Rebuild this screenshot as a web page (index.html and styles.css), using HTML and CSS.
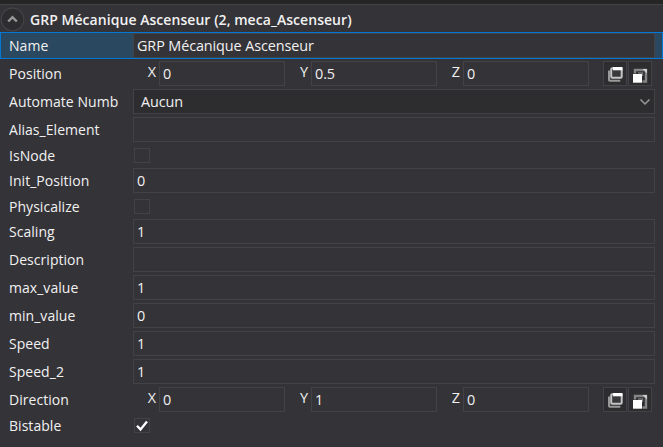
FILE: index.html
```html
<!DOCTYPE html>
<html lang="fr">
<head>
<meta charset="utf-8">
<title>GRP Mécanique Ascenseur</title>
<link rel="stylesheet" href="styles.css">
</head>
<body>
<svg width="0" height="0" class="defs">
  <symbol id="copy" viewBox="0 0 22 23">
    <path d="M5 8.500v9.500q0 .8.800.8h10.500" fill="none" stroke="#999" stroke-width="2"/>
    <rect x="7.200" y="6.200" width="10.500" height="9.600" rx="1" fill="#38383b" stroke="#c4c4c4" stroke-width="2"/>
    <path d="M9 5h9.500v3.300h-9.500z" fill="#fff"/>
  </symbol>
  <symbol id="paste" viewBox="0 0 22 23">
    <path d="M6 11.500V8h11v11.500h-3.500" fill="none" stroke="#858585" stroke-width="2.400"/>
    <path d="M9 11h4.500v3" fill="none" stroke="#777" stroke-width="1.300"/>
    <path d="M13.500 7h4.500v4.500z" fill="#ccc"/>
    <path d="M4 12h9v8.700H4z" fill="#fff"/>
  </symbol>
</svg>
<main class="panel">
  <header class="head">
    <svg class="toggle" viewBox="0 0 25 25"><circle cx="12.500" cy="12.500" r="11.300"/><path d="M8.200 14.500l4.300-4.300 4.300 4.300"/></svg>
    <h1>GRP Mécanique Ascenseur (2, meca_Ascenseur)</h1>
  </header>
  <div class="row selected"><label>Name</label><div class="field">GRP Mécanique Ascenseur</div></div>
  <div class="row"><label>Position</label><div class="vector">
    <span>X</span><div class="field">0</div><span>Y</span><div class="field">0.5</div><span>Z</span><div class="field">0</div>
    <button><svg><use href="#copy"/></svg></button><button><svg><use href="#paste"/></svg></button></div></div>
  <div class="row"><label>Automate Numb</label><div class="field combo">Aucun<svg viewBox="0 0 12 8"><path d="M1.500 1.500l4.500 4.500 4.500-4.500"/></svg></div></div>
  <div class="row"><label>Alias_Element</label><div class="field"></div></div>
  <div class="row short"><label>IsNode</label><div class="check"></div></div>
  <div class="row"><label>Init_Position</label><div class="field">0</div></div>
  <div class="row short"><label>Physicalize</label><div class="check"></div></div>
  <div class="row"><label>Scaling</label><div class="field">1</div></div>
  <div class="row"><label>Description</label><div class="field"></div></div>
  <div class="row"><label>max_value</label><div class="field">1</div></div>
  <div class="row"><label>min_value</label><div class="field">0</div></div>
  <div class="row"><label>Speed</label><div class="field">1</div></div>
  <div class="row"><label>Speed_2</label><div class="field">1</div></div>
  <div class="row"><label>Direction</label><div class="vector">
    <span>X</span><div class="field">0</div><span>Y</span><div class="field">1</div><span>Z</span><div class="field">0</div>
    <button><svg><use href="#copy"/></svg></button><button><svg><use href="#paste"/></svg></button></div></div>
  <div class="row short"><label>Bistable</label><div class="check"><svg viewBox="0 0 14 13"><path d="M2 6.700l3.500 3.700L12 2.500"/></svg></div></div>
</main>
</body>
</html>
```
FILE: styles.css
```css
* { box-sizing: border-box; }
body {
  margin: 0;
  height: 447px;
  overflow: hidden;
  background: #343338;
  color: #f1f1f1;
  font: 14px/20px "Segoe UI", "Open Sans", "Noto Sans", sans-serif;
}
.defs { display: none; }
.panel { border-top: 4px solid #252526; height: 447px; }
.head {
  height: 28px;
  border-top: 1px solid #434346;
  display: flex;
  align-items: center;
}
.toggle { width: 25px; height: 25px; fill: #2d2d30; stroke: #444447; stroke-width: 1.2; margin-top: 1px; }
.toggle path { fill: none; stroke: #999; stroke-width: 2.4; }
h1 { margin: 2px 0 0 5px; font-size: 14px; line-height: 20px; font-weight: 600; letter-spacing: 0.05px; white-space: nowrap; }
.row {
  height: 28px;
  padding: 2px 8px 1px 9px;
  display: grid;
  grid-template-columns: 111px 522px;
  column-gap: 13px;
}
label { line-height: 25px; letter-spacing: 0.04px; overflow: hidden; white-space: nowrap; }
.field {
  height: 25px;
  border: 1px solid #434346;
  background: #343338;
  padding-left: 3px;
  font-size: 14.4px;
  letter-spacing: -0.1px;
  line-height: 23px;
  white-space: nowrap;
}
.selected {
  height: 27px;
  padding: 0 7px 0 8px;
  border: 1px solid #0078d7;
  background: #2a4860;
}
.combo {
  background: #2d2d30;
  padding: 0 3px 0 7px;
  display: flex;
  align-items: center;
  justify-content: space-between;
}
.combo svg { width: 12px; height: 8px; fill: none; stroke: #999; stroke-width: 1.5; }
.vector {
  display: grid;
  grid-template-columns: 26px 126px 26px 126px 26px 126px 24px 24px;
}
.vector span { text-align: right; padding-right: 3px; line-height: 21px; font-size: 14.4px; }
.vector button {
  height: 25px;
  width: 24px;
  padding: 0;
  border: 1px solid #434346;
  background: #2d2d30;
  margin-left: 14px;
}
.vector button:last-child { margin-left: 15px; }
.vector button svg { display: block; width: 22px; height: 23px; }
.short { height: 23px; padding-top: 0; padding-bottom: 0; }
.short label { line-height: 25px; }
.check { width: 16px; height: 15px; margin: 5px 0 0 1px; border: 1px solid #434346; }
.check svg { display: block; width: 14px; height: 13px; fill: none; stroke: #fff; stroke-width: 2.3; }
```
